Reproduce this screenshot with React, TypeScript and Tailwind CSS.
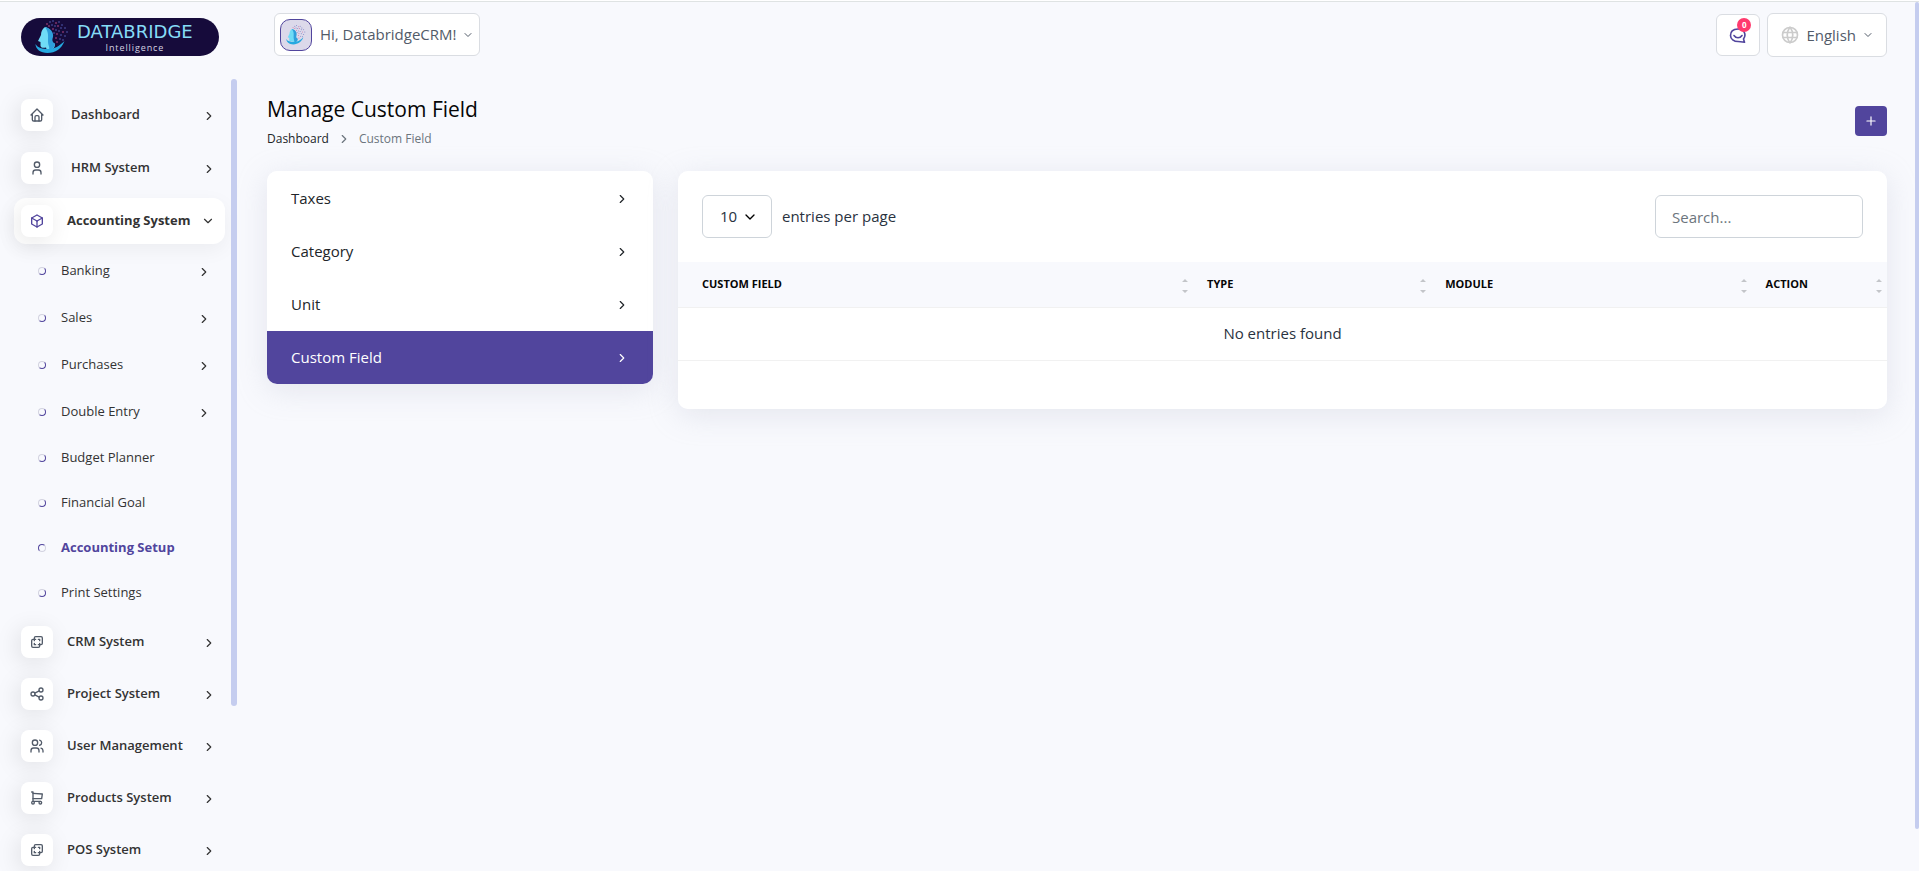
import {
  TbBox,
  TbChevronDown,
  TbChevronRight,
  TbHome,
  TbLayersDifference,
  TbPlus,
  TbShare,
  TbShoppingCart,
  TbUser,
  TbUsers,
  TbWorld,
} from "react-icons/tb";
import type { IconType } from "react-icons";

const topItems = [
  { name: "Dashboard", icon: TbHome },
  { name: "HRM System", icon: TbUser },
];

const bottomItems = [
  { name: "CRM System", icon: TbLayersDifference },
  { name: "Project System", icon: TbShare },
  { name: "User Management", icon: TbUsers },
  { name: "Products System", icon: TbShoppingCart },
  { name: "POS System", icon: TbLayersDifference },
];

const subItems = [
  { name: "Banking", nested: true },
  { name: "Sales", nested: true },
  { name: "Purchases", nested: true },
  { name: "Double Entry", nested: true },
  { name: "Budget Planner" },
  { name: "Financial Goal" },
  { name: "Accounting Setup", active: true },
  { name: "Print Settings" },
];

const setupLinks = ["Taxes", "Category", "Unit", "Custom Field"];

const columns = [
  { name: "Custom Field", width: "w-[42.6%]" },
  { name: "Type", width: "w-[19.7%]" },
  { name: "Module", width: "w-[26.5%]" },
  { name: "Action", width: "w-[11.2%]" },
];

function FaceMark({ className }: { className?: string }) {
  const dots = [
    [12, 4], [15, 2], [18, 1], [21, 3], [24, 2], [27, 5], [14, 6], [17, 5], [20, 6], [23, 6], [26, 8], [30, 8],
    [18, 9], [21, 10], [24, 11], [28, 12], [32, 12], [19, 13], [22, 14], [26, 15], [30, 16], [21, 18], [25, 19], [28, 20], [22, 22],
  ];
  return (
    <svg viewBox="0 0 34 34" className={className} aria-hidden="true">
      <path d="M10 7C7 9 6 12 6 15l-3 6 2.500 1v4c.5 2 3 2 5.500 1.500L12 31c5 0 8-3 8-7-3-1-4-3-3-6 1-5-2-10-7-11z" fill="#6fdcf6" />
      <path d="M10 7c5 1 9 5 8 10-1 3-1 5 2 6.500 0 3-2 6-6 7 1-4-1-5-1-9 0-5 1-9-3-14.500z" fill="#2f9fdb" />
      <path d="M.5 24c0 5 5 9 12 9 8 0 14-4 17-12-5 5-10 8-16 8-6 0-11-1-13-5z" fill="#25a9e0" />
      {dots.map(([x, y], i) => (
        <circle key={i} cx={x} cy={y} r="0.8" fill={i % 3 === 0 ? "#c94f8c" : "#5560b8"} />
      ))}
    </svg>
  );
}

function NavItem({ name, icon: Icon, wide }: { name: string; icon: IconType; wide?: boolean }) {
  return (
    <li>
      <a href="#" className="flex h-[46px] items-center rounded-xl pl-[7px] pr-[9px] text-[13px] font-semibold text-[#333333]">
        <span className="flex size-8 items-center justify-center rounded-lg bg-white text-[#525b69] shadow-[-3px_4px_23px_rgba(0,0,0,0.1)]">
          <Icon className="size-4" />
        </span>
        <span className={wide ? "ml-[18px]" : "ml-[14px]"}>{name}</span>
        <TbChevronRight className="ml-auto mt-[2px] size-[14px]" />
      </a>
    </li>
  );
}

function Sidebar() {
  return (
    <aside className="relative w-[239px] shrink-0">
      <a href="#" className="ml-[21px] mt-4 flex h-[38px] w-[198px] items-center rounded-full bg-[#160b3b] pl-[14px]">
        <FaceMark className="size-[34px]" />
        <span className="ml-2 flex flex-col items-center">
          <span className="font-['DejaVu_Sans'] text-[18px] leading-[21px] text-[#86dcf7]">DATABRIDGE</span>
          <span className="text-[9px] leading-3 tracking-widest text-[#d5d2e2]">Intelligence</span>
        </span>
      </a>
      <nav className="mt-9 w-[225px] pl-[14px]">
        <ul className="flex flex-col gap-[7px]">
          {topItems.map((item) => (
            <NavItem key={item.name} {...item} wide />
          ))}
          <li>
            <a href="#" className="flex h-[46px] items-center rounded-xl bg-white pl-[7px] pr-[10px] text-[13px] font-bold text-[#333333] shadow-[0_6px_20px_rgba(0,0,0,0.05)]">
              <span className="flex size-8 items-center justify-center rounded-lg bg-white text-[#51459d] shadow-[-3px_4px_23px_rgba(0,0,0,0.1)]">
                <TbBox className="size-4" />
              </span>
              <span className="ml-[14px]">Accounting System</span>
              <TbChevronDown className="ml-auto size-[14px]" />
            </a>
            <ul className="mt-[3px]">
              {subItems.map((item) => (
                <li key={item.name}>
                  <a
                    href="#"
                    className={`flex items-center pl-6 pr-[14px] text-[13px] ${item.nested ? "h-[47px]" : "h-[45px]"} ${
                      item.active ? "font-bold text-[#51459d]" : "text-[#333333]"
                    }`}
                  >
                    <span
                      className={`size-2 rounded-full border ${
                        item.active
                          ? "border-[#d3d3e0] border-l-[#51459d] border-t-[#51459d]"
                          : "border-[#d3d3e0] border-b-[#51459d] border-r-[#51459d]"
                      }`}
                    />
                    <span className="ml-[15px]">{item.name}</span>
                    {item.nested && <TbChevronRight className="ml-auto mt-[3px] size-[14px]" />}
                  </a>
                </li>
              ))}
            </ul>
          </li>
        </ul>
        <ul className="mt-1 flex flex-col gap-[6px]">
          {bottomItems.map((item) => (
            <NavItem key={item.name} {...item} />
          ))}
        </ul>
      </nav>
      {/* scroll thumb */}
      <div className="absolute right-[2px] top-[77px] h-[627px] w-[6px] rounded-full bg-[#c5cdef]" />
    </aside>
  );
}

function Topbar() {
  return (
    <header className="flex items-start justify-between pl-[7px] pt-[11px] text-[15px] text-[#525b69]">
      <button className="flex h-[43px] items-center rounded-md border border-[#dadde2] bg-white pl-[5px] pr-[5px]">
        <span className="flex size-8 items-center justify-center rounded-[10px] border border-[#51459d] bg-[#dcd9ea]">
          <FaceMark className="size-5" />
        </span>
        <span className="ml-2">Hi, DatabridgeCRM!</span>
        <TbChevronDown className="ml-[5px] size-3" />
      </button>
      <div className="flex items-center gap-[7px]">
        <button aria-label="Messages" className="relative flex h-[42px] w-11 items-center justify-center rounded-md border border-[#dadde2] bg-white text-[#51459d]">
          <svg viewBox="0 0 18 18" className="size-[18px]" fill="none" stroke="currentColor" strokeWidth="1.6" strokeLinecap="round" strokeLinejoin="round" aria-hidden="true">
            <path d="M14.500 13C18 8 14.500 3 9 3S1.500 6 1.500 9.500 5 15.500 9 15.500c1.500 0 3 .2 6.500.8z" />
            <path d="M5 9.500c2 3 6 3 8 0" />
          </svg>
          <span className="absolute right-2 top-[3px] flex size-[14px] items-center justify-center rounded-full bg-[#ff3a6e] text-[8px] font-bold leading-none text-white">0</span>
        </button>
        <button className="flex h-11 items-center rounded-md border border-[#dadde2] bg-white pl-3 pr-3">
          <TbWorld className="size-5 text-[#cccccc]" />
          <span className="ml-[6px]">English</span>
          <TbChevronDown className="ml-[6px] size-3" />
        </button>
      </div>
    </header>
  );
}

function SetupMenu() {
  return (
    <nav className="w-[386px] shrink-0 overflow-hidden rounded-[10px] bg-white pt-px">
      {setupLinks.map((name) => (
        <a
          key={name}
          href="#"
          className={`flex h-[53px] items-center justify-between px-6 text-[15px] ${
            name === "Custom Field" ? "bg-[#51459d] text-white" : "text-[#212529]"
          }`}
        >
          {name}
          <TbChevronRight className="size-[14px]" />
        </a>
      ))}
    </nav>
  );
}

function FieldTable() {
  return (
    <section className="min-w-0 flex-1 overflow-hidden rounded-[10px] bg-white pb-12">
      <div className="flex items-center justify-between p-6 text-[15px] text-[#293240]">
        <label className="flex items-center gap-[10px]">
          <span className="relative flex items-center">
            <select className="h-[43px] w-[70px] appearance-none rounded-md border border-[#ced4da] bg-white pl-[17px]">
              <option>10</option>
              <option>25</option>
              <option>50</option>
            </select>
            <TbChevronDown className="pointer-events-none absolute right-[14px] size-4 text-black" />
          </span>
          entries per page
        </label>
        <input type="search" aria-label="Search" placeholder="Search..." className="h-[43px] w-[208px] rounded-md border border-[#ced4da] px-4 placeholder:text-[#6c757d]" />
      </div>
      <table className="w-full table-fixed text-left">
        <thead>
          <tr className="h-[45px] border-b border-[#f1f1f1] bg-[#f8f9fd]">
            {columns.map((col) => (
              <th key={col.name} className={`${col.width} pl-[14px] pr-[5px] text-[11px] font-bold uppercase text-[#060606] first:pl-6`}>
                <span className="flex items-center justify-between">
                  {col.name}
                  <svg viewBox="0 0 6 18" className="h-[18px] w-[6px]" fill="#c3c5c9" aria-hidden="true">
                    <path d="M0 7l3-3 3 3zM0 15l3 3 3-3z" />
                  </svg>
                </span>
              </th>
            ))}
          </tr>
        </thead>
        <tbody>
          <tr className="h-[53px] border-b border-[#f1f1f1]">
            <td colSpan={4} className="text-center text-[15px] text-[#293240]">No entries found</td>
          </tr>
        </tbody>
      </table>
    </section>
  );
}

export default function App() {
  return (
    <div className="relative h-screen overflow-hidden bg-[#f8f9fd] font-['Open_Sans',sans-serif]">
      <div className="h-[2px] border-b border-[#dfe3e3] bg-white" />
      <div className="flex">
        <Sidebar />
        <main className="min-w-0 flex-1 pl-7 pr-8">
          <Topbar />
          <div className="mt-9 flex items-center justify-between">
            <div>
              <h1 className="text-[21px] leading-8 text-[#060606]">Manage Custom Field</h1>
              <ol className="mt-1 flex items-center text-[12px] leading-5">
                <li><a href="#" className="text-[#212529]">Dashboard</a></li>
                <li className="flex items-center text-[#6c757d]">
                  <TbChevronRight className="mx-2 size-[14px]" />
                  Custom Field
                </li>
              </ol>
            </div>
            <button aria-label="Create" className="flex h-[30px] w-8 items-center justify-center rounded bg-[#51459d] text-white">
              <TbPlus className="size-[14px]" />
            </button>
          </div>
          <div className="mt-[22px] flex items-start gap-[25px]">
            <div className="rounded-[10px] shadow-[0_6px_30px_rgba(182,186,203,0.3)]">
              <SetupMenu />
            </div>
            <div className="min-w-0 flex-1 rounded-[10px] shadow-[0_6px_30px_rgba(182,186,203,0.3)]">
              <FieldTable />
            </div>
          </div>
        </main>
      </div>
      <div className="absolute right-0 top-[2px] h-[95%] w-1 rounded-full bg-[#c5cdef]" />
    </div>
  );
}
